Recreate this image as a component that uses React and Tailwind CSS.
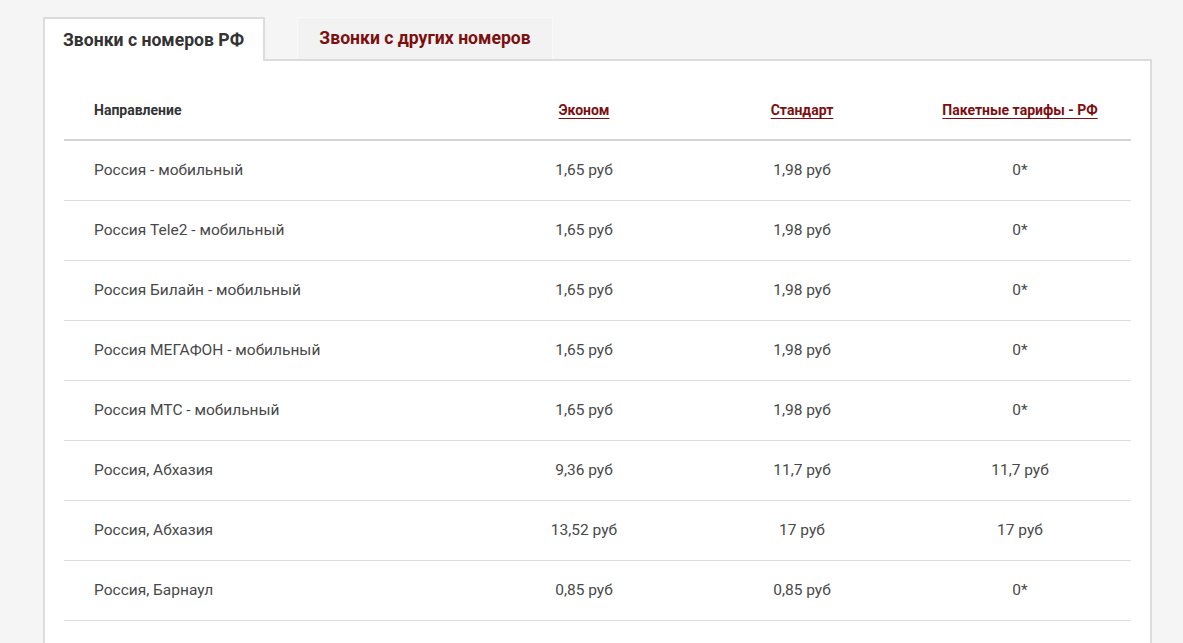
import React from "react";

const rows = [
  ["Россия - мобильный", "1,65 руб", "1,98 руб", "0*"],
  ["Россия Tele2 - мобильный", "1,65 руб", "1,98 руб", "0*"],
  ["Россия Билайн - мобильный", "1,65 руб", "1,98 руб", "0*"],
  ["Россия МЕГАФОН - мобильный", "1,65 руб", "1,98 руб", "0*"],
  ["Россия МТС - мобильный", "1,65 руб", "1,98 руб", "0*"],
  ["Россия, Абхазия", "9,36 руб", "11,7 руб", "11,7 руб"],
  ["Россия, Абхазия", "13,52 руб", "17 руб", "17 руб"],
  ["Россия, Барнаул", "0,85 руб", "0,85 руб", "0*"],
];

export default function App() {
  return (
    <div
      className="min-h-screen bg-[#f5f5f5] pt-[17px] pl-[43px] pr-[31px]"
      style={{ fontFamily: "Roboto, 'Liberation Sans', sans-serif" }}
    >
      <div className="flex items-end">
        <div className="relative z-10 -mb-[2px] flex h-[44px] w-[222px] items-center border-l-2 border-t-2 border-r-2 border-[#dcdcdc] bg-white pl-[18px] text-[17.6px] font-bold text-[#333]">
          Звонки с номеров РФ
        </div>
        <div className="ml-[32px] flex h-[42px] w-[256px] items-center justify-center border-t border-l border-r border-[#f9f9f9] bg-[#f2f2f2] text-[17.6px] font-bold text-[#7b1010]">
          Звонки с других номеров
        </div>
      </div>
      <div className="border-2 border-[#dcdcdc] bg-white px-[19px] pt-[20px] pb-[40px]">
        <div className="grid h-[60px] grid-cols-[411px_218px_218px_218px] items-center border-b-2 border-[#d4d4d4] text-[14px] font-bold">
          <div className="pl-[30px] text-[#333]">Направление</div>
          <div className="text-center text-[#7b1010] underline underline-offset-[3px]">Эконом</div>
          <div className="text-center text-[#7b1010] underline underline-offset-[3px]">Стандарт</div>
          <div className="text-center text-[#7b1010] underline underline-offset-[3px]">Пакетные тарифы - РФ</div>
        </div>
        {rows.map((r, i) => (
          <div
            key={i}
            className="grid h-[60px] grid-cols-[411px_218px_218px_218px] items-center border-b border-[#dcdcdc] text-[15.5px] text-[#484848]"
          >
            <div className="pl-[30px]">{r[0]}</div>
            <div className="text-center">{r[1]}</div>
            <div className="text-center">{r[2]}</div>
            <div className="text-center">{r[3]}</div>
          </div>
        ))}
      </div>
    </div>
  );
}
